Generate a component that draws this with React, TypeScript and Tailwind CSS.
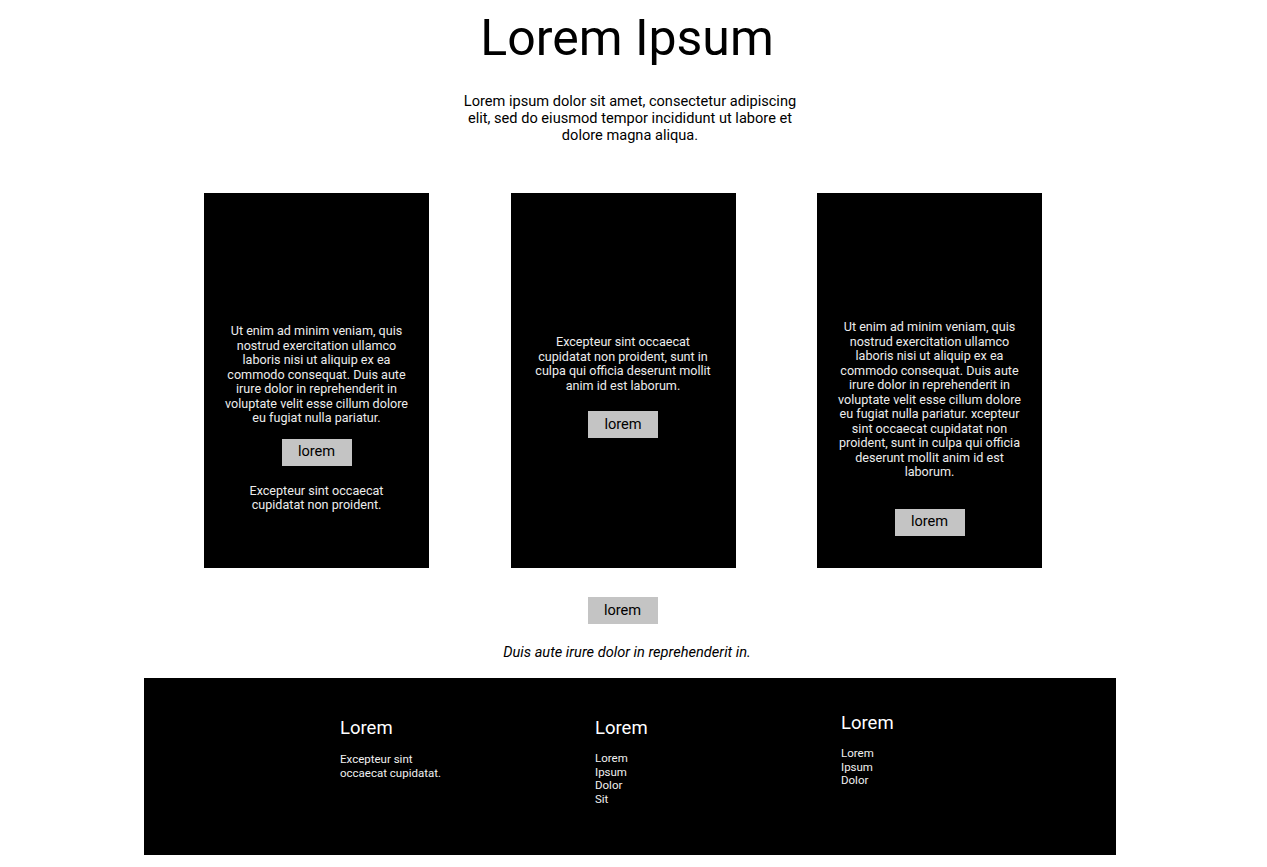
export default function App() {
  const font = { fontFamily: "Roboto, 'Noto Sans', sans-serif" };
  return (
    <div className="bg-white text-black w-[1254px]" style={font}>
      <header className="flex flex-col items-center">
        <h1 className="mt-[10px] text-[50px] leading-[56px] font-normal">Lorem Ipsum</h1>
        <p className="mt-[27px] ml-[6px] w-[345px] text-center text-[14.6px] leading-[17px]">
          Lorem ipsum dolor sit amet, consectetur adipiscing elit, sed do eiusmod tempor incididunt ut labore et dolore magna aliqua.
        </p>
      </header>

      <section className="mt-[49px] ml-[204px] flex gap-[81.5px]">
        <div className="w-[225px] h-[375px] bg-black flex flex-col items-center pt-[131px] px-5 text-center">
          <p className="text-[12.6px] leading-[14.5px] text-[#ececec]">
            Ut enim ad minim veniam, quis nostrud exercitation ullamco laboris nisi ut aliquip ex ea commodo consequat. Duis aute irure dolor in reprehenderit in voluptate velit esse cillum dolore eu fugiat nulla pariatur.
          </p>
          <button className="mt-[13px] w-[70px] h-[27px] bg-[#c4c4c4] text-[14.6px] text-black">lorem</button>
          <p className="mt-[18px] w-[150px] text-[12.6px] leading-[14.5px] text-[#ececec]">
            Excepteur sint occaecat cupidatat non proident.
          </p>
        </div>

        <div className="w-[225px] h-[375px] bg-black flex flex-col items-center pt-[142px] px-5 text-center">
          <p className="text-[12.6px] leading-[14.5px] text-[#ececec]">
            Excepteur sint occaecat cupidatat non proident, sunt in culpa qui officia deserunt mollit anim id est laborum.
          </p>
          <button className="mt-[18px] w-[70px] h-[27px] bg-[#c4c4c4] text-[14.6px] text-black">lorem</button>
        </div>

        <div className="w-[225px] h-[375px] bg-black flex flex-col items-center pt-[127px] px-5 text-center">
          <p className="text-[12.6px] leading-[14.5px] text-[#ececec]">
            Ut enim ad minim veniam, quis nostrud exercitation ullamco laboris nisi ut aliquip ex ea commodo consequat. Duis aute irure dolor in reprehenderit in voluptate velit esse cillum dolore eu fugiat nulla pariatur. xcepteur sint occaecat cupidatat non proident, sunt in culpa qui officia deserunt mollit anim id est laborum.
          </p>
          <button className="mt-[29px] w-[70px] h-[27px] bg-[#c4c4c4] text-[14.6px] text-black">lorem</button>
        </div>
      </section>

      <div className="mt-[29px] flex justify-center pr-[9px]">
        <button className="w-[70px] h-[27px] bg-[#c4c4c4] text-[14.6px] text-black">lorem</button>
      </div>
      <p className="mt-[20px] text-center text-[14.6px] leading-[17px] italic">
        Duis aute irure dolor in reprehenderit in.
      </p>

      <footer className="mt-[17px] ml-[144px] w-[972px] h-[177px] bg-black text-white flex pl-[196px]">
        <div className="w-[255px] pt-[40px]">
          <h3 className="text-[18.5px] leading-[21px]">Lorem</h3>
          <p className="mt-[13px] text-[11.5px] leading-[14px] text-[#f0f0f0]">
            Excepteur sint
            <br />
            occaecat cupidatat.
          </p>
        </div>
        <div className="w-[246px] pt-[40px]">
          <h3 className="text-[18.5px] leading-[21px]">Lorem</h3>
          <ul className="mt-[13px] text-[11.5px] leading-[13.7px] text-[#f0f0f0]">
            <li>Lorem</li>
            <li>Ipsum</li>
            <li>Dolor</li>
            <li>Sit</li>
          </ul>
        </div>
        <div className="pt-[35px]">
          <h3 className="text-[18.5px] leading-[21px]">Lorem</h3>
          <ul className="mt-[13px] text-[11.5px] leading-[13.7px] text-[#f0f0f0]">
            <li>Lorem</li>
            <li>Ipsum</li>
            <li>Dolor</li>
          </ul>
        </div>
      </footer>
    </div>
  );
}
